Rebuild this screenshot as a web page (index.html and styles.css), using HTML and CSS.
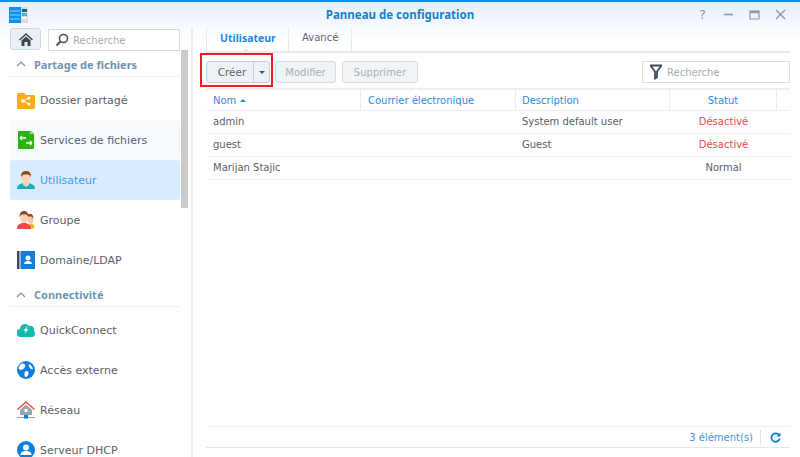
FILE: index.html
```html
<!DOCTYPE html>
<html lang="fr">
<head>
<meta charset="utf-8">
<title>Panneau de configuration</title>
<link rel="stylesheet" href="styles.css">
</head>
<body>
<div class="window">
  <header class="titlebar">
    <svg class="app-logo" width="20" height="18" viewBox="0 0 20 18"><rect width="12" height="16" y="1" fill="#0f8fe6"/><path d="M1 5h10M1 9h10M1 13h10" stroke="#9fd4f7" stroke-width="1"/><rect x="12" y="1" width="7" height="16" fill="#d7dde0"/><rect x="13" y="3" width="5" height="3" fill="#2f5a68"/><rect x="13" y="7" width="5" height="3" fill="#55b3c9"/><rect x="13" y="11" width="5" height="2" fill="#f2f5f5"/></svg>
    <div class="title">Panneau de configuration</div>
    <div class="win-controls">
      <span class="ctl-help">?</span>
      <svg width="11" height="11" viewBox="0 0 11 11"><path d="M1 5.5h9" stroke="#8c98a5" stroke-width="1.6"/></svg>
      <svg width="11" height="11" viewBox="0 0 11 11"><path d="M1 2h9v8H1z" fill="none" stroke="#8c98a5" stroke-width="1.2"/><path d="M1 3h9" stroke="#8c98a5" stroke-width="2.4"/></svg>
      <svg width="11" height="11" viewBox="0 0 11 11"><path d="M1 1l9 9M10 1l-9 9" stroke="#8c98a5" stroke-width="1.4"/></svg>
    </div>
  </header>
  <div class="main">
    <aside class="sidebar">
      <div class="side-scroll">
        <div class="side-top">
          <button class="home-btn"><svg width="14" height="13" viewBox="0 0 14 13"><path d="M7 0L0 6.5l1 1L7 2l6 5.5 1-1z" fill="#3d4750"/><path d="M2.5 7.5L7 3.5l4.5 4V13H8.500V9h-3v4h-3z" fill="#3d4750"/></svg></button>
          <div class="side-search"><svg width="14" height="14" viewBox="0 0 14 14"><circle cx="8.500" cy="5.500" r="4" fill="none" stroke="#4a5560" stroke-width="1.600"/><path d="M5.500 8.500L1.500 12.500" stroke="#4a5560" stroke-width="2.200"/></svg><span>Recherche</span></div>
        </div>
        <div class="section first"><svg width="10" height="6" viewBox="0 0 10 6"><path d="M1 5l4-4 4 4" fill="none" stroke="#6f94b4" stroke-width="1.200"/></svg><span>Partage de fichiers</span></div>
        <div class="item">
          <svg class="ic" width="18" height="17" viewBox="0 0 18 17"><path d="M0 2a1 1 0 011-1h6l2 2h8a1 1 0 011 1v12a1 1 0 01-1 1H1a1 1 0 01-1-1z" fill="#fbab1c"/><path d="M6 9l6-3M6 9l6 3" stroke="#fff" stroke-width="1"/><circle cx="6" cy="9" r="1.700" fill="#fff"/><circle cx="12" cy="6" r="1.500" fill="#fff"/><circle cx="12" cy="12" r="1.500" fill="#fff"/></svg>
          <span>Dossier partagé</span></div>
        <div class="item hover">
          <svg class="ic" width="18" height="18" viewBox="0 0 18 18"><path d="M1 0h13l3 3v14a1 1 0 01-1 1H1z" fill="#28b30e"/><path d="M13 0v3h4z" fill="#a5e08f"/><path d="M3 7h6M3 7l2-2M3 7l2 2M15 12H9M15 12l-2-2M15 12l-2 2" stroke="#fff" stroke-width="1.400" fill="none"/></svg>
          <span>Services de fichiers</span></div>
        <div class="item active">
          <svg class="ic" width="18" height="18" viewBox="0 0 18 18"><path d="M0 18c0-4 3-5 6-6h6c3 1 6 2 6 6z" fill="#14b2c0"/><path d="M6 10h6v4l-3 2-3-2z" fill="#fbd3b4"/><ellipse cx="9" cy="6.500" rx="4.500" ry="5.500" fill="#fbd3b4"/><path d="M4.200 6.500C3.500 2 6 0 9 0s5.500 2 4.800 6.500C13 4 12 3.500 9 3.500S5 4 4.200 6.500z" fill="#8a4a22"/></svg>
          <span>Utilisateur</span></div>
        <div class="item">
          <svg class="ic" width="18" height="18" viewBox="0 0 18 18"><ellipse cx="13.500" cy="8" rx="3" ry="4.500" fill="#f6c7a4"/><path d="M10 5c1-3 5-3 6 0 .5 1 .3 2 0 3-.5-2-1-2.500-3-2.500z" fill="#8a4a22"/><path d="M12 15c0-2 2-3 4-2l2 3-3 2z" fill="#f5b916"/><path d="M0 18c0-4 2-5 5-6h4c3 1 5 2 5 6z" fill="#ef4a4a"/><ellipse cx="7" cy="6.500" rx="4" ry="5.500" fill="#fbd3b4"/><path d="M2.800 6.500C2 2 4.500 0 7 0s5 2 4.200 6.500C10.500 4 10 3.500 7 3.500S3.500 4 2.800 6.500z" fill="#8a4a22"/></svg>
          <span>Groupe</span></div>
        <div class="item">
          <svg class="ic" width="18" height="18" viewBox="0 0 18 18"><rect width="2.500" height="18" fill="#3c4a57"/><rect x="3.500" width="14.500" height="18" fill="#0f7fdc"/><circle cx="11" cy="7" r="2.500" fill="#fff"/><path d="M7 13c0-2 2-3 4-3s4 1 4 3z" fill="#fff"/></svg>
          <span>Domaine/LDAP</span></div>
        <div class="section second"><svg width="10" height="6" viewBox="0 0 10 6"><path d="M1 5l4-4 4 4" fill="none" stroke="#6f94b4" stroke-width="1.200"/></svg><span>Connectivité</span></div>
        <div class="item">
          <svg class="ic" width="18" height="16" viewBox="0 0 18 16"><path d="M4 15a4 4 0 01-1-8 5 5 0 019-3 4 4 0 015 5 3.500 3.500 0 01-2 6z" fill="#16b9b2"/><path d="M10 4L6.500 9h2L7.500 12 11.500 7h-2z" fill="#fff"/></svg>
          <span>QuickConnect</span></div>
        <div class="item">
          <svg class="ic" width="18" height="18" viewBox="0 0 18 18"><circle cx="9" cy="9" r="9" fill="#0d7fe0"/><path d="M5 2.500c2 0 4 1 3 3s-1 2-3 3-2 0-3.500-1C2 5 3 3.500 5 2.500zM9 10c2 0 3 1 2.500 3S9 17 8 15.500 7.500 10 9 10zM12 3c2 1 3.500 3 4 5-1 .5-2.500 0-3-1s-2-3-1-4z" fill="#fff"/></svg>
          <span>Accès externe</span></div>
        <div class="item">
          <svg class="ic" width="18" height="18" viewBox="0 0 18 18"><path d="M9 0L0 8l1 1 8-7 8 7 1-1z" fill="#f0504f"/><path d="M3 9l6-5.500L15 9v5H3z" fill="#9aa6b0"/><rect x="7.500" y="8" width="3" height="3" fill="#fff"/><path d="M0 16.500h18" stroke="#8fa3b3"/><rect x="7" y="14" width="4" height="3.500" fill="#0f7fdc"/></svg>
          <span>Réseau</span></div>
        <div class="item">
          <svg class="ic" width="18" height="18" viewBox="0 0 18 18"><circle cx="9" cy="9" r="9" fill="#0d7fe0"/><circle cx="9" cy="6.500" r="3" fill="#fff"/><path d="M3.500 14c0-3 2.500-4 5.500-4s5.500 1 5.500 4z" fill="#fff"/></svg>
          <span>Serveur DHCP</span></div>
      </div>
      <div class="scrollbar"></div>
    </aside>
    <section class="content">
      <nav class="tabs">
        <div class="tab current">Utilisateur</div>
        <div class="tab">Avancé</div>
      </nav>
      <div class="toolbar">
        <div class="split"><span class="split-main">Créer</span><span class="split-arrow"><i></i></span></div>
        <button class="btn">Modifier</button>
        <button class="btn">Supprimer</button>
        <div class="filter"><svg width="14" height="16" viewBox="0 0 14 16"><path d="M1 1.500h12M1.500 1.500l4.500 6v7l2-1V7.500l4.500-6" fill="none" stroke="#414c57" stroke-width="1.800"/></svg><span>Recherche</span></div>
      </div>
      <div class="grid head">
        <div class="c1">Nom <i class="sort"></i></div>
        <div class="c2">Courrier électronique</div>
        <div class="c3">Description</div>
        <div class="c4">Statut</div>
        <div class="c5"></div>
      </div>
      <div class="grid row"><div class="c1">admin</div><div class="c2"></div><div class="c3">System default user</div><div class="c4 off">Désactivé</div><div class="c5"></div></div>
      <div class="grid row"><div class="c1">guest</div><div class="c2"></div><div class="c3">Guest</div><div class="c4 off">Désactivé</div><div class="c5"></div></div>
      <div class="grid row"><div class="c1">Marijan Stajic</div><div class="c2"></div><div class="c3"></div><div class="c4">Normal</div><div class="c5"></div></div>
      <div class="spacer"></div>
      <footer class="status">
        <span class="count">3 élément(s)</span>
        <span class="refresh"><svg width="11" height="11" viewBox="0 0 11 11"><path d="M9.300 3.500A4.200 4.200 0 1 0 9.700 6.500" fill="none" stroke="#0f7fdc" stroke-width="1.800"/><path d="M10.500 0.500v4h-4z" fill="#0f7fdc"/></svg></span>
      </footer>
    </section>
  </div>
</div>
<div class="callout"></div>
</body>
</html>
```
FILE: styles.css
```css
* { box-sizing: border-box; }
html, body { margin: 0; padding: 0; }
body {
  width: 800px; height: 457px; overflow: hidden; position: relative;
  font-family: "DejaVu Sans", sans-serif; font-size: 11px; color: #505a64; background: #fff;
}
.window { height: 457px; display: flex; flex-direction: column;
  background: linear-gradient(#e3f0fb 0, #f7fbff 26px, #fff 40px); border-top: 2px solid #0a8fe8; }
.titlebar { height: 25px; display: flex; align-items: center; position: relative; flex: none; padding-left: 9px; }
.app-logo { margin-top: 1px; }
.title { position: absolute; left: 0; right: 0; text-align: center; top: 5px; font-family: "Noto Sans", sans-serif; font-size: 11.500px; font-weight: bold; color: #1a7fc9; }
.win-controls { margin-left: auto; display: flex; align-items: center; gap: 15px; padding-right: 14px; position: relative; }
.ctl-help { width: 11px; font-size: 13px; color: #8c98a5; line-height: 11px; text-align: center; }
.main { flex: 1; display: flex; min-height: 0; }
.sidebar { width: 193px; flex: none; display: flex; border-right: 2px solid #e8ecef; overflow: hidden; padding-left: 10px; }
.side-scroll { width: 170px; flex: none; }
.scrollbar { width: 7px; height: 158px; margin-left: 1px; margin-top: 23px; background: #c9cbcd; }
.side-top { display: flex; gap: 7px; height: 25px; padding-top: 1px; align-items: flex-start; }
.home-btn { width: 31px; height: 22px; padding: 0; border: 1px solid #cfd9e2; border-radius: 3px; background: #eaf0f6; display: flex; align-items: center; justify-content: center; }
.side-search { width: 132px; height: 22px; margin-top: 1px; border: 1px solid #d5dde5; background: #fff; display: flex; align-items: center; gap: 4px; padding-left: 6px; color: #a5adb5; font-size: 10px; }
.section { display: flex; align-items: center; gap: 8px; padding-left: 6px; border-bottom: 1px solid #eef1f4; color: #6f94b4; font-family: "Noto Sans", sans-serif; font-weight: bold; font-size: 11px; }
.section.first { height: 25px; margin-bottom: 3px; }
.section.second { height: 27px; padding-top: 3px; margin-bottom: 3px; }
.item { height: 40px; display: flex; align-items: center; padding-left: 7px; gap: 5px; font-size: 11px; color: #57616b; border-radius: 3px; }
.item .ic { flex: none; width: 18px; margin-right: 0; }
.item span { position: relative; top: 0; }
.item.hover { background: #f5faff; }
.item.active { background: #d9ecff; color: #3c9af0; }
.content { flex: 1; display: flex; flex-direction: column; padding: 0 10px 0 13px; min-width: 0; }
.tabs { display: flex; height: 26px; border-bottom: 2px solid #e6eaee; flex: none; }
.tab { height: 24px; line-height: 22px; padding: 0 13px; border-left: 1px solid #e6eaee; font-size: 10px; color: #5b6670; }
.tab:last-child { border-right: 1px solid #e6eaee; }
.tab.current { color: #1f86de; font-family: "Noto Sans", sans-serif; font-weight: bold; font-size: 10.500px; width: 82px; padding: 0 0 0 13px; position: relative; }
.tab.current::after { content: ""; position: absolute; left: 34px; bottom: -2px; border: 5px solid transparent; border-top: 0; border-bottom-color: #e6eaee; }
.toolbar { display: flex; align-items: center; height: 35px; padding-top: 3px; flex: none; }
.split { display: flex; width: 64px; height: 22px; border: 1px solid #c6d0d9; border-radius: 3px; background: #eef2f6; font-size: 10.500px; color: #5b6670; }
.split-main { width: 47px; text-align: center; line-height: 20px; padding-left: 4px; border-right: 1px solid #c6d0d9; }
.split-arrow { flex: 1; display: flex; align-items: center; justify-content: center; }
.split-arrow i { border: 3px solid transparent; border-top-color: #4a5560; border-bottom: 0; }
.btn { height: 22px; border: 1px solid #d5dde4; border-radius: 3px; background: #f1f4f7; color: #a9b0b7; font: inherit; font-size: 10px; padding: 0; margin-left: 5px; width: 61px; }
.btn + .btn { width: 76px; margin-left: 6px; }
.filter { margin-left: auto; width: 148px; height: 22px; border: 1px solid #d5dde5; display: flex; align-items: center; gap: 4px; padding-left: 6px; font-size: 10px; color: #a5adb5; background: #fff; }
.grid { display: grid; grid-template-columns: 155px 155px 154px 107px 13px; flex: none; }
.head { height: 23px; border-top: 2px solid #eef1f4; border-bottom: 1px solid #e9eef3; color: #2a8ce4; font-size: 10px; line-height: 21px; }
.head > div { border-right: 1px solid #e9eef3; padding-left: 7px; }
.head .c5 { border-right: 0; }
.sort { display: inline-block; vertical-align: 2px; border: 3px solid transparent; border-bottom-color: #2a8ce4; border-top: 0; margin-left: 0; }
.row { height: 23px; line-height: 22px; border-bottom: 1px solid #eef1f4; font-size: 10px; color: #56606a; }
.row > div { padding-left: 7px; }
.c3 { padding-left: 6px !important; }
.c4 { text-align: center; padding-left: 0 !important; }
.off { color: #f2474a; }
.spacer { flex: 1; }
.status { height: 22px; flex: none; margin-bottom: 9px; border-top: 1px solid #eef1f4; border-bottom: 1px solid #dfe7ef; display: flex; align-items: center; justify-content: flex-end; font-size: 10px; color: #3f93e2; }
.count { margin-right: 1px; }
.refresh { width: 30px; height: 14px; margin-left: 6px; border-left: 1px solid #dde3e9; display: flex; align-items: center; justify-content: center; }
.callout { position: absolute; left: 200px; top: 53px; width: 73px; height: 34px; border: 2px solid #ee1c25; pointer-events: none; }
```
